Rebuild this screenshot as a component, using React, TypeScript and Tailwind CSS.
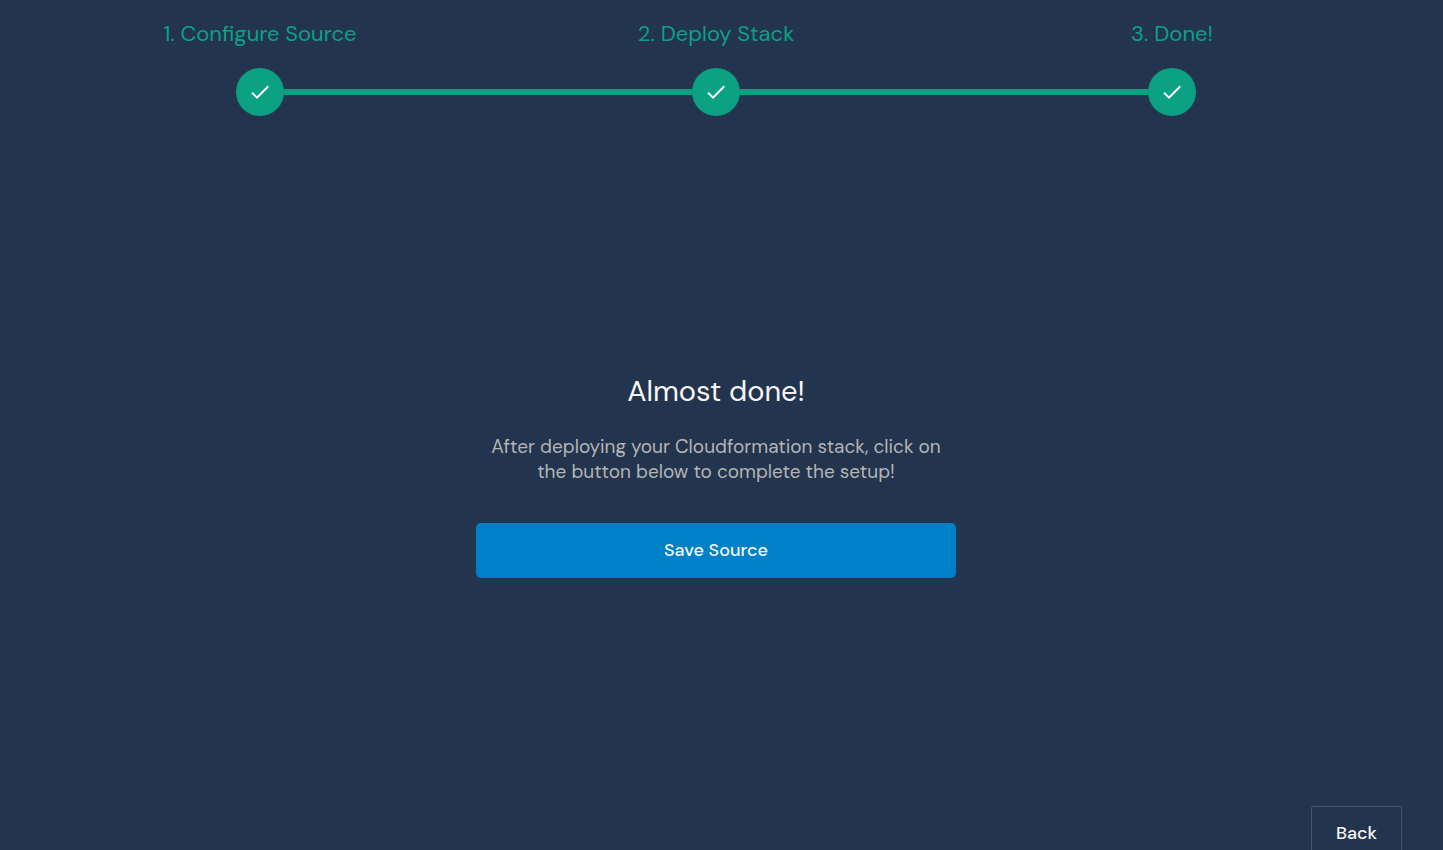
const steps = ['Configure Source', 'Deploy Stack', 'Done!'];

function CheckIcon() {
  return (
    <svg viewBox="0 0 24 24" className="size-6 fill-white" aria-hidden="true">
      <path d="M9 16.17 4.83 12l-1.42 1.41L9 19 21 7l-1.41-1.41z" />
    </svg>
  );
}

function Connector({ visible }: { visible: boolean }) {
  return <span className={visible ? 'h-1.5 flex-1 bg-[#0ba183]' : 'h-1.5 flex-1'} />;
}

function Stepper() {
  return (
    <ol className="grid grid-cols-3 pr-[43px] pl-8">
      {steps.map((label, index) => (
        <li key={label} className="flex flex-col items-center gap-5">
          <span className="text-[22px] leading-7 text-[#0ba183]">
            {index + 1}. {label}
          </span>
          <div className="flex w-full items-center">
            <Connector visible={index > 0} />
            <span className="flex size-12 items-center justify-center rounded-full bg-[#0ba183]">
              <CheckIcon />
            </span>
            <Connector visible={index < steps.length - 1} />
          </div>
        </li>
      ))}
    </ol>
  );
}

export default function App() {
  return (
    <div className="flex h-screen flex-col overflow-hidden bg-[#23344e] pt-5 font-['DM_Sans','Inter',sans-serif]">
      <Stepper />
      <main className="flex flex-1 flex-col items-center justify-center pt-[26px] pr-[43px] pl-8">
        <h1 className="text-[29px] leading-10 text-[#f6f6f6]">Almost done!</h1>
        <p className="mt-[23px] max-w-[480px] text-center text-[19px] leading-[25px] text-[#b4b4b4]">
          After deploying your Cloudformation stack, click on
          <br />
          the button below to complete the setup!
        </p>
        <button
          type="button"
          className="mt-[39px] h-[55px] w-full max-w-[480px] rounded-[5px] bg-[#0081c7] text-lg font-medium text-[#f6f6f6]"
        >
          Save Source
        </button>
      </main>
      <footer className="-mb-[10px] flex shrink-0 justify-end pr-[41px]">
        <button
          type="button"
          className="h-[54px] w-[91px] rounded-xs border border-[#435470] text-lg font-medium text-[#f6f6f6]"
        >
          Back
        </button>
      </footer>
    </div>
  );
}
